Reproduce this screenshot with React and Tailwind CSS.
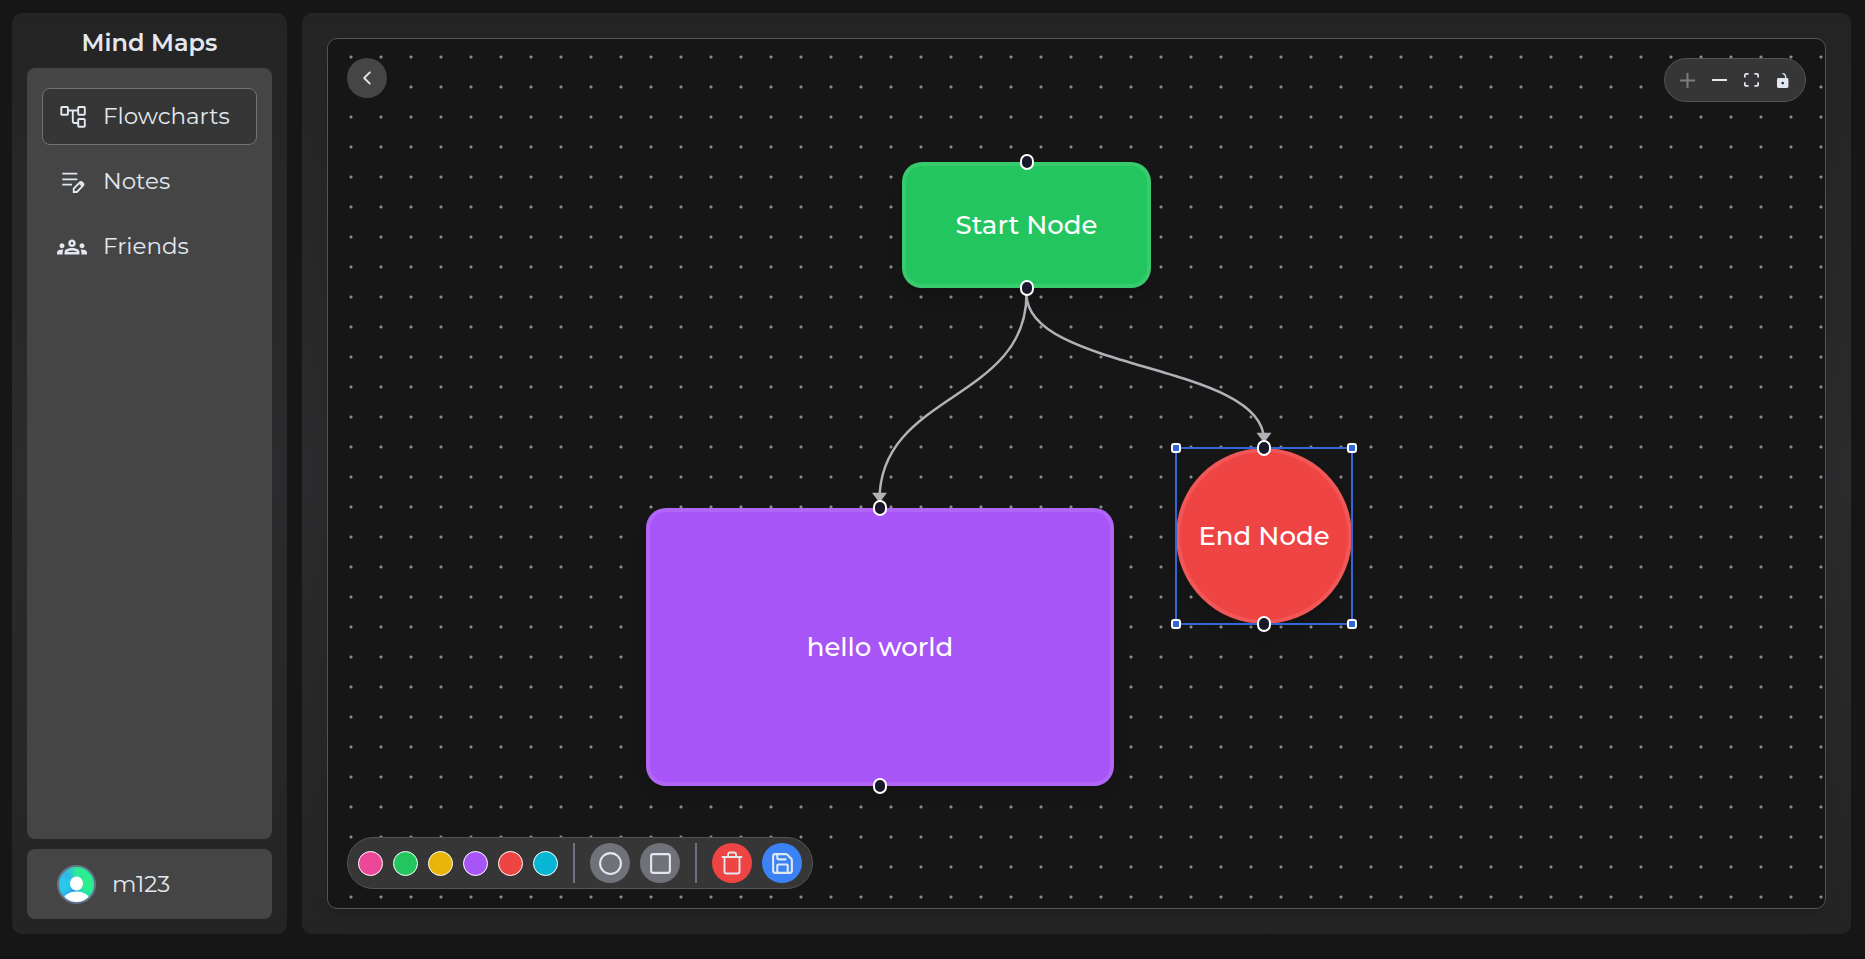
import { MdOutlineGroups } from "react-icons/md";
import { LuCircle, LuSquare, LuSave } from "react-icons/lu";
import { IoIosArrowBack } from "react-icons/io";

function TreeIcon() {
  return (
    <svg viewBox="0 0 28 28" className="size-7 shrink-0" fill="none" stroke="currentColor" strokeWidth="1.900" aria-hidden="true">
      <rect x="2.300" y="4" width="6.600" height="7.800" rx="0.800" />
      <rect x="19.200" y="4" width="6.600" height="7.800" rx="0.800" />
      <rect x="19.200" y="16" width="6.600" height="7.800" rx="0.800" />
      <path d="M9 7.500h10M13.800 7.500V18.500a1.500 1.500 0 0 0 1.500 1.500H19" />
    </svg>
  );
}

function NoteIcon() {
  return (
    <svg viewBox="0 0 30 30" className="size-[30px] shrink-0" fill="none" stroke="currentColor" strokeWidth="1.800" aria-hidden="true">
      <path d="M5.300 6.700h15M5.300 12.300h15M5.300 17.700h9.700" />
      <path d="M16.700 25v-3.400l6.100-6.100a1.600 1.600 0 0 1 2.300 0l.9.900a1.600 1.600 0 0 1 0 2.300L19.900 25z" />
      <path d="M22 16.300l1.500-1.200 2.800 2.800-1.300 1.500z" fill="currentColor" strokeWidth="1" />
    </svg>
  );
}

const NAV = [
  { label: "Flowcharts", icon: <TreeIcon />, active: true },
  { label: "Notes", icon: <NoteIcon />, active: false },
  { label: "Friends", icon: <MdOutlineGroups size={30} />, active: false },
];

const SWATCHES = [
  { name: "Pink", cls: "bg-[#ec4899]" },
  { name: "Green", cls: "bg-[#22c55e]" },
  { name: "Yellow", cls: "bg-[#eab308]" },
  { name: "Purple", cls: "bg-[#a855f7]" },
  { name: "Red", cls: "bg-[#ef4444]" },
  { name: "Cyan", cls: "bg-[#06b6d4]" },
];

function Avatar() {
  return (
    <span className="size-[39px] shrink-0 rounded-full border-2 border-[#64748b] overflow-hidden bg-[conic-gradient(from_0deg,#2eea96,#2bf08e_30%,#24d8b8_42%,#2f8cf5_55%,#28c8e8_68%,#2cc8ec_78%,#2fb8e8_88%,#2eea96)]">
      <svg viewBox="0 0 35 35" className="size-full" fill="#fff" aria-hidden="true">
        <ellipse cx="17.500" cy="16.500" rx="6.500" ry="7" />
        <ellipse cx="17.500" cy="33" rx="13" ry="8.500" />
      </svg>
    </span>
  );
}

function Sidebar() {
  return (
    <aside className="flex w-[275px] shrink-0 flex-col rounded-[10px] bg-linear-to-b from-[#242424] via-[#2b2b2d] to-[#242424] p-[15px] pt-3">
      <h1 className="h-[43px] pt-0.5 text-center text-2xl leading-8 font-semibold">Mind Maps</h1>
      <nav className="flex flex-1 flex-col gap-2 rounded-lg bg-[#454545] px-[15px] py-5">
        {NAV.map((n) => (
          <a
            key={n.label}
            href="#"
            className={
              n.active
                ? "flex h-[57px] items-center gap-4 rounded-lg border border-[#78716c] bg-[#363636] px-4 text-[23px]"
                : "flex h-[57px] items-center gap-4 rounded-lg border border-transparent px-[14px] text-[23px]"
            }
          >
            {n.icon}
            {n.label}
          </a>
        ))}
      </nav>
      <button type="button" className="mt-2.5 flex h-[70px] items-center gap-4 rounded-lg bg-[#454545] px-[30px] text-[23px]">
        <Avatar />
        m123
      </button>
    </aside>
  );
}

function Handle({ bottom }) {
  return (
    <span
      className={
        bottom
          ? "absolute -bottom-2 left-1/2 h-4 w-[14px] -translate-x-1/2 rounded-full border-2 border-white bg-[#1a192b]"
          : "absolute -top-2 left-1/2 h-4 w-[14px] -translate-x-1/2 rounded-full border-2 border-white bg-[#1a192b]"
      }
    />
  );
}

function FlowNode({ label, place, look, children }) {
  return (
    <div className={`absolute ${place}`}>
      <div className={`flex size-full items-center justify-center border-4 border-white/10 text-[26px] font-medium whitespace-nowrap text-white shadow-lg ${look}`}>
        {label}
      </div>
      {children}
      <Handle />
      <Handle bottom />
    </div>
  );
}

const GRIPS = ["-left-1 -top-1", "-right-1 -top-1", "-left-1 -bottom-1", "-right-1 -bottom-1"];

function Selection() {
  return (
    <div className="absolute -inset-px border-2 border-[#3367d9]">
      {GRIPS.map((g) => (
        <span key={g} className={`absolute -m-0.5 size-[10px] rounded-[3px] border-2 border-white bg-[#3367d9] ${g}`} />
      ))}
    </div>
  );
}

function Edges() {
  return (
    <svg className="absolute inset-0 size-full" fill="none" stroke="#b1b1b7" strokeWidth="2.500" aria-hidden="true">
      <path d="M698.500 255C698.500 362 551.500 354 551.500 461" />
      <path d="M698.500 255C698.500 332 936 324 936 401" />
      <path d="M545.500 454.500h12l-6 8z" fill="#b1b1b7" strokeWidth="1.500" />
      <path d="M930 394.500h12l-6 8z" fill="#b1b1b7" strokeWidth="1.500" />
    </svg>
  );
}

function ViewControls() {
  return (
    <div className="absolute top-[19px] right-[19px] flex h-11 items-center rounded-full border border-[#545454] bg-[#363636] px-1.5">
      <button type="button" disabled aria-label="Zoom in" className="grid size-8 place-items-center opacity-40">
        <svg viewBox="0 0 32 32" className="size-[15px]" fill="currentColor"><path d="M32 18.133H18.133V32h-4.266V18.133H0v-4.266h13.867V0h4.266v13.867H32z" /></svg>
      </button>
      <button type="button" aria-label="Zoom out" className="grid size-8 place-items-center">
        <svg viewBox="0 0 32 5" className="w-[15px]" fill="currentColor"><path d="M0 0h32v4.200H0z" /></svg>
      </button>
      <button type="button" aria-label="Fit view" className="grid size-8 place-items-center">
        <svg viewBox="0 0 32 30" className="w-[15px]" fill="currentColor"><path d="M3.692 4.630c0-.530.400-.938.939-.938h5.215V0H4.708C2.130 0 0 2.054 0 4.630v5.216h3.692V4.631zM27.354 0h-5.200v3.692h5.170c.530 0 .984.400.984.939v5.215H32V4.631A4.624 4.624 0 0027.354 0zm.954 24.830c0 .532-.400.940-.939.940h-5.215v3.768h5.215c2.577 0 4.631-2.130 4.631-4.707v-5.139h-3.692v5.139zm-23.677.940c-.531 0-.939-.400-.939-.940v-5.138H0v5.139c0 2.577 2.130 4.707 4.708 4.707h5.138V25.770H4.631z" /></svg>
      </button>
      <button type="button" aria-label="Lock" className="grid size-8 place-items-center">
        <svg viewBox="0 0 25 32" className="h-[15px]" fill="currentColor"><path d="M21.333 10.667H19.810V7.619C19.810 3.429 16.380 0 12.190 0c-4.114 1.828-1.370 2.133.305 2.438 1.676.305 4.420 2.590 4.420 5.181v3.048H3.047A3.056 3.056 0 000 13.714v15.238A3.056 3.056 0 003.048 32h18.285a3.056 3.056 0 003.048-3.048V13.714a3.056 3.056 0 00-3.048-3.047zM12.190 24.533a3.056 3.056 0 01-3.047-3.047 3.056 3.056 0 013.047-3.048 3.056 3.056 0 013.048 3.048 3.056 3.056 0 01-3.048 3.047z" /></svg>
      </button>
    </div>
  );
}

const TOOL = "grid size-10 place-items-center rounded-full";

function Toolbar() {
  return (
    <div className="absolute bottom-[19px] left-[19px] flex h-[52px] items-center gap-2.5 rounded-full border border-[#545454] bg-[#363636] px-2.5">
      {SWATCHES.map((s) => (
        <button key={s.name} type="button" aria-label={s.name} className={`size-[25px] rounded-full border border-white ${s.cls}`} />
      ))}
      <span className="mx-[5px] h-10 w-0.5 bg-[#6b7280]" />
      <button type="button" aria-label="Add circle" className={`${TOOL} bg-[#71717a]`}><LuCircle size={25} /></button>
      <button type="button" aria-label="Add rectangle" className={`${TOOL} bg-[#71717a]`}><LuSquare size={25} /></button>
      <span className="mx-[5px] h-10 w-0.5 bg-[#6b7280]" />
      <button type="button" aria-label="Delete" className={`${TOOL} bg-[#ef4444]`}>
        <svg viewBox="0 0 24 24" className="size-6" fill="none" stroke="currentColor" strokeWidth="1.900" strokeLinecap="round" strokeLinejoin="round"><path d="M2.500 6h19M4.500 6v14.500a2 2 0 0 0 2 2h11a2 2 0 0 0 2-2V6M8 6V3.500a2 2 0 0 1 2-2h4a2 2 0 0 1 2 2V6" /></svg>
      </button>
      <button type="button" aria-label="Save" className={`${TOOL} bg-[#3b82f6]`}><LuSave size={25} /></button>
    </div>
  );
}

export default function App() {
  return (
    <div className="flex h-screen gap-[15px] bg-[#161616] pt-[13px] pr-[14px] pb-[25px] pl-3 font-['Montserrat','Inter',sans-serif] text-[#e2e8f0]">
      <Sidebar />
      <main className="flex min-w-0 flex-1 rounded-[10px] bg-linear-to-b from-[#242424] via-[#2b2b2d] to-[#242424] p-[25px]">
        <section aria-label="Flowchart canvas" className="relative flex-1 overflow-hidden rounded-[10px] border border-[#545454] bg-[#161616] bg-[radial-gradient(circle,#8d8d93_1px,transparent_2px)] bg-size-[30px_30px] bg-position-[8px_3px] shadow-lg">
          <Edges />
          <FlowNode label="Start Node" place="left-[574px] top-[123px] h-[126px] w-[249px]" look="rounded-[20px] bg-[#22c55e]" />
          <FlowNode label="hello world" place="left-[318px] top-[469px] h-[278px] w-[468px]" look="rounded-[20px] bg-[#a855f7]" />
          <FlowNode label="End Node" place="left-[848px] top-[409px] size-[176px]" look="rounded-full bg-[#ef4444]">
            <Selection />
          </FlowNode>
          <button type="button" aria-label="Back" className="absolute top-[19px] left-[19px] grid size-10 place-items-center rounded-full bg-[#454545]">
            <IoIosArrowBack size={20} />
          </button>
          <ViewControls />
          <Toolbar />
        </section>
      </main>
    </div>
  );
}
